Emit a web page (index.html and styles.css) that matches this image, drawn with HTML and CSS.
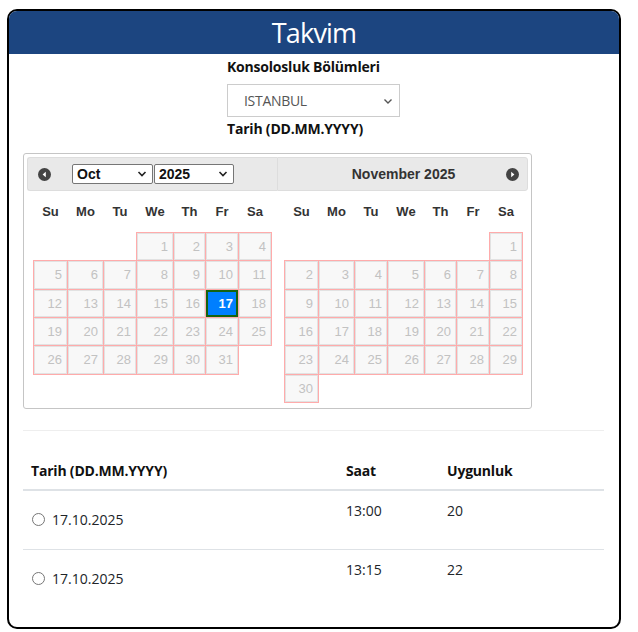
FILE: index.html
```html
<!DOCTYPE html>
<html lang="tr">
<head>
    <meta charset="UTF-8">
    <meta name="viewport" content="width=device-width, initial-scale=1.0">
    <title>Takvim</title>
    <link rel="stylesheet" href="styles.css">
</head>
<body>
    <div class="card">
        <div class="card-header">Takvim</div>
        <div class="card-body">
            <div class="form-block">
                <label class="form-label">Konsolosluk Bölümleri</label>
                <div class="select-box">
                    <span>ISTANBUL</span>
                    <svg width="10" height="10" viewBox="0 0 10 10"><path d="M1.5 3.5 L5 7 L8.5 3.5" fill="none" stroke="#555" stroke-width="1.4"/></svg>
                </div>
                <label class="form-label">Tarih (DD.MM.YYYY)</label>
            </div>

            <div class="datepicker">
                <div class="dp-group">
                    <div class="dp-header dp-first">
                        <span class="dp-nav">
                            <svg width="13" height="13" viewBox="0 0 13 13"><circle cx="6.5" cy="6.5" r="6.5" fill="#444"/><path d="M7.8 3.8 L4.6 6.5 L7.8 9.2 Z" fill="#fff"/></svg>
                        </span>
                        <div class="dp-select month-select"><span>Oct</span><svg width="10" height="10" viewBox="0 0 10 10"><path d="M1.5 3 L5 6.5 L8.5 3" fill="none" stroke="#222" stroke-width="1.6"/></svg></div>
                        <div class="dp-select year-select"><span>2025</span><svg width="10" height="10" viewBox="0 0 10 10"><path d="M1.5 3 L5 6.5 L8.5 3" fill="none" stroke="#222" stroke-width="1.6"/></svg></div>
                    </div>
                    <table class="dp-cal cal-oct">
                        <thead>
                            <tr><th>Su</th><th>Mo</th><th>Tu</th><th>We</th><th>Th</th><th>Fr</th><th>Sa</th></tr>
                        </thead>
                        <tbody>
                            <tr><td class="empty"></td><td class="empty"></td><td class="empty"></td><td><span>1</span></td><td><span>2</span></td><td><span>3</span></td><td><span>4</span></td></tr>
                            <tr><td><span>5</span></td><td><span>6</span></td><td><span>7</span></td><td><span>8</span></td><td><span>9</span></td><td><span>10</span></td><td><span>11</span></td></tr>
                            <tr><td><span>12</span></td><td><span>13</span></td><td><span>14</span></td><td><span>15</span></td><td><span>16</span></td><td class="selected"><span>17</span></td><td><span>18</span></td></tr>
                            <tr><td><span>19</span></td><td><span>20</span></td><td><span>21</span></td><td><span>22</span></td><td><span>23</span></td><td><span>24</span></td><td><span>25</span></td></tr>
                            <tr><td><span>26</span></td><td><span>27</span></td><td><span>28</span></td><td><span>29</span></td><td><span>30</span></td><td><span>31</span></td><td class="empty"></td></tr>
                        </tbody>
                    </table>
                </div>
                <div class="dp-group">
                    <div class="dp-header dp-last">
                        <span class="dp-title">November 2025</span>
                        <span class="dp-nav dp-next">
                            <svg width="13" height="13" viewBox="0 0 13 13"><circle cx="6.5" cy="6.5" r="6.5" fill="#444"/><path d="M5.2 3.8 L8.4 6.5 L5.2 9.2 Z" fill="#fff"/></svg>
                        </span>
                    </div>
                    <table class="dp-cal cal-nov">
                        <thead>
                            <tr><th>Su</th><th>Mo</th><th>Tu</th><th>We</th><th>Th</th><th>Fr</th><th>Sa</th></tr>
                        </thead>
                        <tbody>
                            <tr><td class="empty"></td><td class="empty"></td><td class="empty"></td><td class="empty"></td><td class="empty"></td><td class="empty"></td><td><span>1</span></td></tr>
                            <tr><td><span>2</span></td><td><span>3</span></td><td><span>4</span></td><td><span>5</span></td><td><span>6</span></td><td><span>7</span></td><td><span>8</span></td></tr>
                            <tr><td><span>9</span></td><td><span>10</span></td><td><span>11</span></td><td><span>12</span></td><td><span>13</span></td><td><span>14</span></td><td><span>15</span></td></tr>
                            <tr><td><span>16</span></td><td><span>17</span></td><td><span>18</span></td><td><span>19</span></td><td><span>20</span></td><td><span>21</span></td><td><span>22</span></td></tr>
                            <tr><td><span>23</span></td><td><span>24</span></td><td><span>25</span></td><td><span>26</span></td><td><span>27</span></td><td><span>28</span></td><td><span>29</span></td></tr>
                            <tr><td><span>30</span></td><td class="empty"></td><td class="empty"></td><td class="empty"></td><td class="empty"></td><td class="empty"></td><td class="empty"></td></tr>
                        </tbody>
                    </table>
                </div>
            </div>

            <hr class="divider">

            <table class="slots">
                <thead>
                    <tr><th class="col-date">Tarih (DD.MM.YYYY)</th><th class="col-time">Saat</th><th>Uygunluk</th></tr>
                </thead>
                <tbody>
                    <tr>
                        <td><label class="slot-date"><span class="radio"></span>17.10.2025</label></td>
                        <td>13:00</td>
                        <td>20</td>
                    </tr>
                    <tr>
                        <td><label class="slot-date"><span class="radio"></span>17.10.2025</label></td>
                        <td>13:15</td>
                        <td>22</td>
                    </tr>
                </tbody>
            </table>
        </div>
    </div>
</body>
</html>
```

FILE: styles.css
```css
body {
    margin: 0;
    font-family: "Open Sans", "Noto Sans", sans-serif;
    color: #212529;
    background: #fff;
}

.card {
    margin: 9px 17px 0 7px;
    border: 2px solid #000;
    border-radius: 10px;
    overflow: hidden;
    height: 616px;
}

.card-header {
    background: #1c4580;
    color: #fff;
    text-align: center;
    font-size: 27px;
    height: 43px;
    line-height: 44px;
    letter-spacing: -0.8px;
}

.card-body {
    padding: 0 15px 20px 14px;
}

/* consulate + date labels */
.form-block {
    width: 173px;
    margin: 0 auto;
    padding-top: 2px;
}

.form-label {
    display: block;
    font-weight: 700;
    font-size: 14px;
    line-height: 21px;
    color: #111;
    letter-spacing: -0.2px;
}

.select-box {
    height: 31px;
    margin: 7px 0 1px;
    border: 1px solid #ccc;
    display: flex;
    align-items: center;
    justify-content: space-between;
    padding: 0 6px 0 16px;
    font-size: 14px;
    color: #555;
    letter-spacing: -0.3px;
}

/* datepicker */
.datepicker {
    display: inline-flex;
    margin-top: 14px;
    padding: 3px 3px 5px;
    border: 1px solid #c5c5c5;
    border-radius: 3px;
    font-family: "Liberation Sans", Arial, sans-serif;
}

.dp-group {
    width: 250px;
}

.dp-group + .dp-group {
    width: 251px;
}

.dp-header {
    height: 32px;
    background: #e9e9e9;
    border: 1px solid #ddd;
    display: flex;
    align-items: center;
    color: #333;
    font-weight: 700;
    font-size: 14px;
}

.dp-first {
    border-radius: 3px 0 0 3px;
    border-right: 0;
    padding-left: 10px;
}

.dp-last {
    border-radius: 0 3px 3px 0;
    position: relative;
    justify-content: center;
}

.dp-nav {
    display: flex;
    margin-right: 21px;
}

.dp-next {
    position: absolute;
    right: 8px;
    margin: 0;
}

.dp-title {
    padding-left: 2px;
}

.dp-select {
    height: 18px;
    border: 1px solid #767676;
    border-radius: 2px;
    background: #fff;
    display: flex;
    align-items: center;
    justify-content: space-between;
    padding: 0 5px 0 4px;
    font-size: 14px;
    color: #111;
}

.month-select {
    width: 70px;
    margin-right: 1px;
}

.year-select {
    width: 69px;
}

.dp-cal {
    border-collapse: collapse;
    table-layout: fixed;
    font-size: 13px;
    margin: 5px 0 0 6px;
}

.cal-nov {
    margin-left: 7px;
}

.dp-cal th {
    height: 30px;
    padding: 0 0 6px;
    font-weight: 700;
    color: #333;
    text-align: center;
    vertical-align: middle;
}

.dp-cal th:nth-child(1) { width: 34px; }
.dp-cal th:nth-child(2) { width: 36px; }
.dp-cal th:nth-child(3) { width: 33px; }
.dp-cal th:nth-child(4) { width: 37px; }
.dp-cal th:nth-child(5) { width: 32px; }
.dp-cal th:nth-child(6) { width: 33px; }
.dp-cal th:nth-child(7) { width: 33px; }

.dp-cal td {
    padding: 0;
    border: 1px solid #ffabab;
}

.dp-cal td.empty {
    border: 0;
}

.dp-cal td span {
    display: block;
    height: 25.33px;
    line-height: 26px;
    border: 1px solid #e2e2e2;
    background: #f8f8f8;
    color: #c2c2c2;
    text-align: right;
    padding-right: 4px;
}

.dp-cal td.selected span {
    background: #007fff;
    border: 2px solid #15630f;
    height: 23.33px;
    line-height: 24px;
    padding-right: 3px;
    color: #fff;
    font-weight: 700;
}

.divider {
    border: 0;
    border-top: 1px solid #eee;
    margin: 21px 0 0;
}

/* available slots */
.slots {
    width: 100%;
    border-collapse: collapse;
    font-size: 14px;
    margin-top: 13px;
}

.slots th {
    text-align: left;
    font-weight: 700;
    color: #111;
    padding: 16px 8px 8px;
    line-height: 21px;
    border-bottom: 2px solid #dee2e6;
    letter-spacing: -0.2px;
}

.slots th.col-date {
    width: 299px;
}

.slots th.col-time {
    width: 85px;
}

.slots td {
    vertical-align: top;
    padding: 9px 8px 13px;
    line-height: 21px;
    border-bottom: 1px solid #dee2e6;
}

.slots tbody tr:last-child td {
    border-bottom: 0;
}

.slot-date {
    display: flex;
    align-items: center;
    padding-top: 9px;
    padding-bottom: 6px;
}

.radio {
    width: 11px;
    height: 11px;
    border: 1px solid #767676;
    border-radius: 50%;
    margin: 0 7px 0 1px;
}
```
